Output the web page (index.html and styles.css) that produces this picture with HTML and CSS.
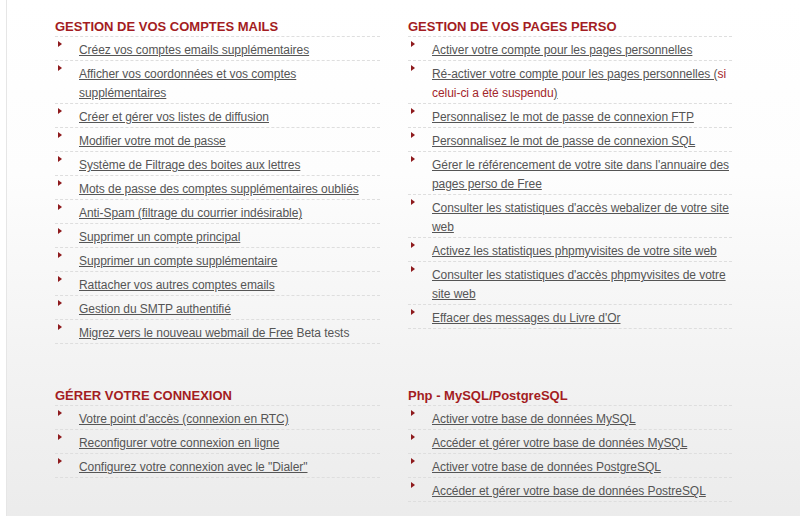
FILE: index.html
```html
<!DOCTYPE html>
<html lang="fr">
<head>
    <meta charset="UTF-8">
    <title>Gestion de votre compte</title>
    <link rel="stylesheet" href="styles.css">
</head>
<body>
<div class="page">
    <div class="sections">
        <div class="section">
            <h2>GESTION DE VOS COMPTES MAILS</h2>
            <ul class="links">
                <li><span><a href="#">Créez vos comptes emails supplémentaires</a></span></li>
                <li><span><a href="#">Afficher vos coordonnées et vos comptes supplémentaires</a></span></li>
                <li><span><a href="#">Créer et gérer vos listes de diffusion</a></span></li>
                <li><span><a href="#">Modifier votre mot de passe</a></span></li>
                <li><span><a href="#">Système de Filtrage des boites aux lettres</a></span></li>
                <li><span><a href="#">Mots de passe des comptes supplémentaires oubliés</a></span></li>
                <li><span><a href="#">Anti-Spam (filtrage du courrier indésirable)</a></span></li>
                <li><span><a href="#">Supprimer un compte principal</a></span></li>
                <li><span><a href="#">Supprimer un compte supplémentaire</a></span></li>
                <li><span><a href="#">Rattacher vos autres comptes emails</a></span></li>
                <li><span><a href="#">Gestion du SMTP authentifié</a></span></li>
                <li><span><a href="#">Migrez vers le nouveau webmail de Free</a> Beta tests</span></li>
            </ul>
        </div>

        <div class="section">
            <h2>GESTION DE VOS PAGES PERSO</h2>
            <ul class="links">
                <li><span><a href="#">Activer votre compte pour les pages personnelles</a></span></li>
                <li><span><a href="#">Ré-activer votre compte pour les pages personnelles (</a><span class="note">si celui-ci a été suspendu</span><a href="#">)</a></span></li>
                <li><span><a href="#">Personnalisez le mot de passe de connexion FTP</a></span></li>
                <li><span><a href="#">Personnalisez le mot de passe de connexion SQL</a></span></li>
                <li><span><a href="#">Gérer le référencement de votre site dans l'annuaire des pages perso de Free</a></span></li>
                <li><span><a href="#">Consulter les statistiques d'accès webalizer de votre site web</a></span></li>
                <li><span><a href="#">Activez les statistiques phpmyvisites de votre site web</a></span></li>
                <li><span><a href="#">Consulter les statistiques d'accès phpmyvisites de votre site web</a></span></li>
                <li><span><a href="#">Effacer des messages du Livre d'Or</a></span></li>
            </ul>
        </div>

        <div class="section">
            <h2>GÉRER VOTRE CONNEXION</h2>
            <ul class="links">
                <li><span><a href="#">Votre point d'accès (connexion en RTC)</a></span></li>
                <li><span><a href="#">Reconfigurer votre connexion en ligne</a></span></li>
                <li><span><a href="#">Configurez votre connexion avec le "Dialer"</a></span></li>
            </ul>
        </div>

        <div class="section">
            <h2>Php - MySQL/PostgreSQL</h2>
            <ul class="links">
                <li><span><a href="#">Activer votre base de données MySQL</a></span></li>
                <li><span><a href="#">Accéder et gérer votre base de données MySQL</a></span></li>
                <li><span><a href="#">Activer votre base de données PostgreSQL</a></span></li>
                <li><span><a href="#">Accéder et gérer votre base de données PostreSQL</a></span></li>
            </ul>
        </div>
    </div>
</div>
</body>
</html>
```

FILE: styles.css
```css
body {
    margin: 0;
    background-color: #fff;
    font-family: "Liberation Sans", Arial, sans-serif;
    font-size: 12px;
    color: #555;
}
.page {
    margin-left: 6px;
    min-height: 530px;
    box-sizing: border-box;
    border-left: 1px solid #e6e6e6;
    padding: 19px 0 0 48px;
    background: linear-gradient(to bottom, #ffffff 0%, #fdfdfd 33%, #f3f3f3 68%, #ebebeb 100%);
}
.sections {
    display: grid;
    grid-template-columns: 325px 324px;
    column-gap: 28px;
    row-gap: 44px;
    align-items: start;
}
h2 {
    margin: 0;
    padding-bottom: 1px;
    font-size: 13px;
    line-height: 16px;
    font-weight: bold;
    color: #a31c22;
    border-bottom: 1px dashed #dedede;
}
.links {
    list-style: none;
    margin: 0;
    padding: 0;
}
.links li {
    display: flex;
    padding: 4px 0 0;
    line-height: 19px;
    border-bottom: 1px dashed #dedede;
}
/* petite flèche rouge devant chaque lien */
.links li::before {
    content: "";
    flex: none;
    width: 0;
    height: 0;
    margin: 0 17px 0 3px;
    border-left: 4px solid #8e1a1d;
    border-top: 3px solid transparent;
    border-bottom: 3px solid transparent;
}
.links a {
    color: #555;
    text-decoration: underline;
}
.links li span {
    letter-spacing: -0.05px;
}
.note {
    color: #a3262b;
}
```
